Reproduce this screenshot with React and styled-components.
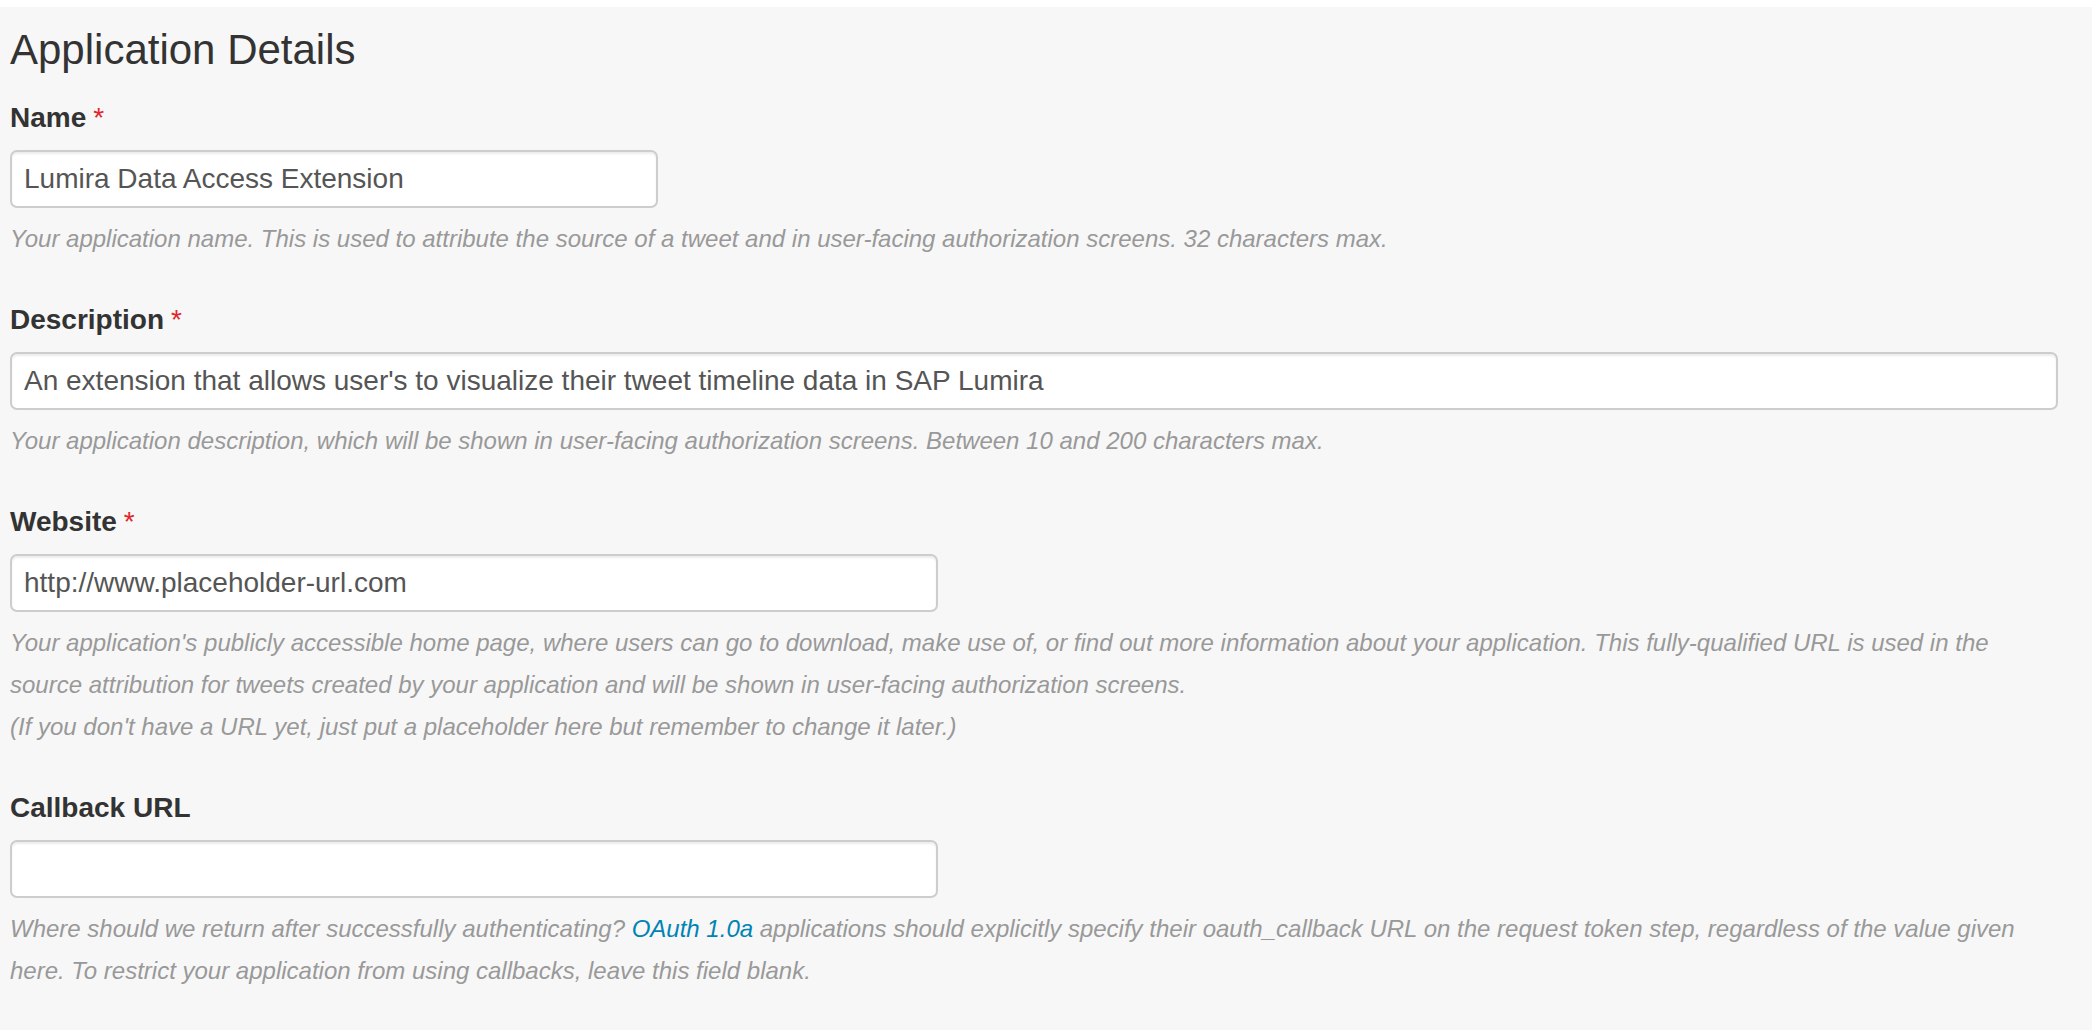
import React from "react";
import styled, { createGlobalStyle } from "styled-components";

const GlobalStyle = createGlobalStyle`
  html, body {
    margin: 0;
    padding: 0;
    background: #ffffff;
  }
  body {
    font-family: "Liberation Sans", Arial, Helvetica, sans-serif;
    color: #333333;
  }
  * { box-sizing: border-box; }
`;

const Page = styled.div`
  margin-top: 7px;
  min-height: calc(100vh - 7px);
  background: #f7f7f7;
  padding: 18px 34px 40px 10px;
`;

const Title = styled.h3`
  margin: 0 0 23px;
  font-size: 42px;
  line-height: 50px;
  font-weight: 400;
  color: #333333;
`;

const Field = styled.div`
  margin-bottom: 40px;
`;

const Label = styled.label`
  display: block;
  font-size: 28px;
  line-height: 40px;
  font-weight: 700;
  color: #333333;
  margin-bottom: 12px;
`;

const Required = styled.span`
  color: #e0262b;
  font-weight: 400;
  margin-left: 7px;
`;

const Input = styled.input`
  display: block;
  width: ${(p) => p.$width};
  height: 58px;
  margin: 0 0 10px;
  padding: 0 12px;
  font-family: "Liberation Sans", Arial, Helvetica, sans-serif;
  font-size: 28px;
  color: #555555;
  background: #ffffff;
  border: 2px solid #cdcdcd;
  border-radius: 7px;
  box-shadow: inset 0 2px 2px rgba(0, 0, 0, 0.075);
  outline: none;
`;

const Help = styled.p`
  margin: 0;
  font-size: 24px;
  line-height: 42px;
  font-style: italic;
  color: #999999;
`;

const Link = styled.a`
  color: #0084b4;
  text-decoration: none;
`;

export default function App() {
  return (
    <>
      <GlobalStyle />
      <Page>
        <Title>Application Details</Title>

        <Field>
          <Label>
            Name<Required>*</Required>
          </Label>
          <Input $width="648px" defaultValue="Lumira Data Access Extension" />
          <Help>
            Your application name. This is used to attribute the source of a tweet and in user-facing authorization screens. 32 characters max.
          </Help>
        </Field>

        <Field>
          <Label>
            Description<Required>*</Required>
          </Label>
          <Input
            $width="2048px"
            defaultValue="An extension that allows user's to visualize their tweet timeline data in SAP Lumira"
          />
          <Help>
            Your application description, which will be shown in user-facing authorization screens. Between 10 and 200 characters max.
          </Help>
        </Field>

        <Field>
          <Label>
            Website<Required>*</Required>
          </Label>
          <Input $width="928px" defaultValue="http://www.placeholder-url.com" />
          <Help>
            Your application's publicly accessible home page, where users can go to download, make use of, or find out more information about your application. This fully-qualified URL is used in the source attribution for tweets created by your application and will be shown in user-facing authorization screens.
            <br />
            (If you don't have a URL yet, just put a placeholder here but remember to change it later.)
          </Help>
        </Field>

        <Field>
          <Label>Callback URL</Label>
          <Input $width="928px" defaultValue="" />
          <Help>
            Where should we return after successfully authenticating? <Link href="#">OAuth 1.0a</Link> applications should explicitly specify their oauth_callback URL on the request token step, regardless of the value given here. To restrict your application from using callbacks, leave this field blank.
          </Help>
        </Field>
      </Page>
    </>
  );
}
